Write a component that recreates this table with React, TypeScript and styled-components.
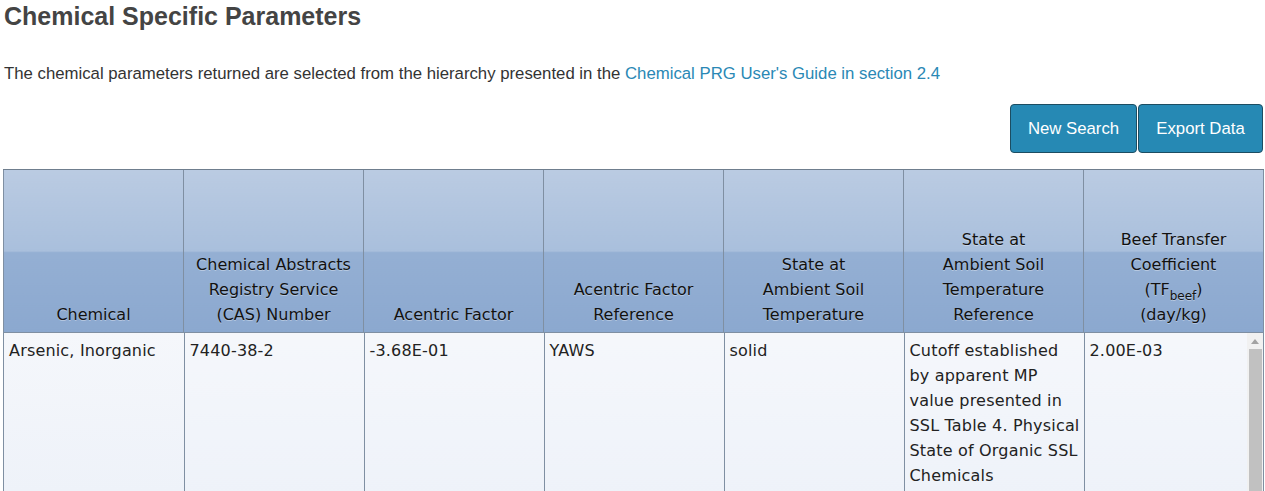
import React from "react";
import styled, { createGlobalStyle } from "styled-components";

const Global = createGlobalStyle`
  html, body { margin: 0; padding: 0; background: #fff; }
  body { font-family: "Liberation Sans", Arial, sans-serif; color: #333; overflow: hidden; }
`;

const Page = styled.div`
  padding: 0 2px 0 3px;
`;

const Title = styled.h2`
  margin: 1px 0 0 1px;
  font-size: 25px;
  line-height: 30px;
  font-weight: bold;
  color: #444;
`;

const Intro = styled.p`
  margin: 33px 0 0 1px;
  font-size: 16.75px;
  line-height: 20px;
  color: #333;
`;

const Link = styled.a`
  color: #2a88b5;
  text-decoration: none;
`;

const ButtonRow = styled.div`
  display: flex;
  justify-content: flex-end;
  margin-top: 20px;
`;

const Button = styled.button<{ $w: number }>`
  width: ${(p) => p.$w}px;
  height: 49px;
  background: #2689b4;
  color: #fff;
  border: 1px solid #1c4d62;
  border-radius: 4px;
  font-family: "Liberation Sans", Arial, sans-serif;
  font-size: 16.75px;
  padding: 0;
  margin-left: 1px;
  cursor: pointer;
`;

const Grid = styled.div`
  margin-top: 16px;
  width: 1261px;
  border-top: 1px solid #6f7e8e;
`;

const HeadTable = styled.table`
  border-collapse: collapse;
  table-layout: fixed;
  width: 1261px;
`;

const HeadCell = styled.th`
  width: 180px;
  height: 162px;
  box-sizing: border-box;
  padding: 0 4px 5px;
  vertical-align: bottom;
  text-align: center;
  font-family: "DejaVu Sans", "Lucida Grande", sans-serif;
  font-weight: normal;
  font-size: 16px;
  line-height: 25px;
  color: #111;
  text-shadow: 0 1px 0 rgba(255, 255, 255, 0.35);
  border: 1px solid #7f8fa2;
  border-top: none;
  background: linear-gradient(
    to bottom,
    #bacbe2 0%,
    #a9bfdc 50%,
    #94afd3 51%,
    #8ba8cf 100%
  );
  sub {
    font-size: 12px;
    vertical-align: -5px;
    line-height: 0;
  }
`;

const BodyArea = styled.div`
  display: flex;
  height: 158px;
  overflow: hidden;
  border-left: 1px solid #7f8fa2;
  border-right: 1px solid #7f8fa2;
  box-sizing: border-box;
  width: 1261px;
`;

const BodyTable = styled.table`
  flex: 1;
  border-collapse: collapse;
  table-layout: fixed;
  align-self: flex-start;
`;

const Cell = styled.td<{ $last?: boolean }>`
  width: ${(p) => (p.$last ? "auto" : "180px")};
  box-sizing: border-box;
  height: 158px;
  padding: 5px 2px 0 5px;
  vertical-align: top;
  text-align: left;
  font-family: "DejaVu Sans", "Lucida Grande", sans-serif;
  font-size: 16px;
  letter-spacing: 0.18px;
  line-height: 25px;
  color: #222;
  background: linear-gradient(to bottom, #f5f7fb, #eef2f9);
  border-left: 1px solid #7f8fa2;
  &:first-child { border-left: none; }
`;

const ScrollBar = styled.div`
  width: 16px;
  flex: none;
  display: flex;
  flex-direction: column;
  align-items: center;
  background: #f1f1f1;
`;

const ScrollArrow = styled.svg`
  margin-top: 6px;
  flex: none;
`;

const ScrollThumb = styled.div`
  margin-top: 5px;
  width: 13px;
  flex: 1;
  background: #c1c1c1;
`;

const headers: React.ReactNode[] = [
  "Chemical",
  <>Chemical Abstracts Registry Service (CAS) Number</>,
  "Acentric Factor",
  <>Acentric Factor<br />Reference</>,
  <>State at<br />Ambient Soil Temperature</>,
  <>State at<br />Ambient Soil Temperature<br />Reference</>,
  <>Beef Transfer Coefficient<br />(TF<sub>beef</sub>)<br />(day/kg)</>,
];

const row = [
  "Arsenic, Inorganic",
  "7440-38-2",
  "-3.68E-01",
  "YAWS",
  "solid",
  "Cutoff established by apparent MP value presented in SSL Table 4. Physical State of Organic SSL Chemicals",
  "2.00E-03",
];

export default function App() {
  return (
    <>
      <Global />
      <Page>
        <Title>Chemical Specific Parameters</Title>
        <Intro>
          The chemical parameters returned are selected from the hierarchy presented in the{" "}
          <Link href="#">Chemical PRG User's Guide in section 2.4</Link>
        </Intro>
        <ButtonRow>
          <Button $w={127}>New Search</Button>
          <Button $w={125}>Export Data</Button>
        </ButtonRow>
        <Grid>
          <HeadTable>
            <thead>
              <tr>
                {headers.map((h, i) => (
                  <HeadCell key={i}>{h}</HeadCell>
                ))}
              </tr>
            </thead>
          </HeadTable>
          <BodyArea>
            <BodyTable>
              <tbody>
                <tr>
                  {row.map((c, i) => (
                    <Cell key={i} $last={i === row.length - 1}>
                      {c}
                    </Cell>
                  ))}
                </tr>
              </tbody>
            </BodyTable>
            <ScrollBar>
              <ScrollArrow width="8" height="5" viewBox="0 0 8 5">
                <polygon points="4,0 8,5 0,5" fill="#a3a3a3" />
              </ScrollArrow>
              <ScrollThumb />
            </ScrollBar>
          </BodyArea>
        </Grid>
      </Page>
    </>
  );
}
